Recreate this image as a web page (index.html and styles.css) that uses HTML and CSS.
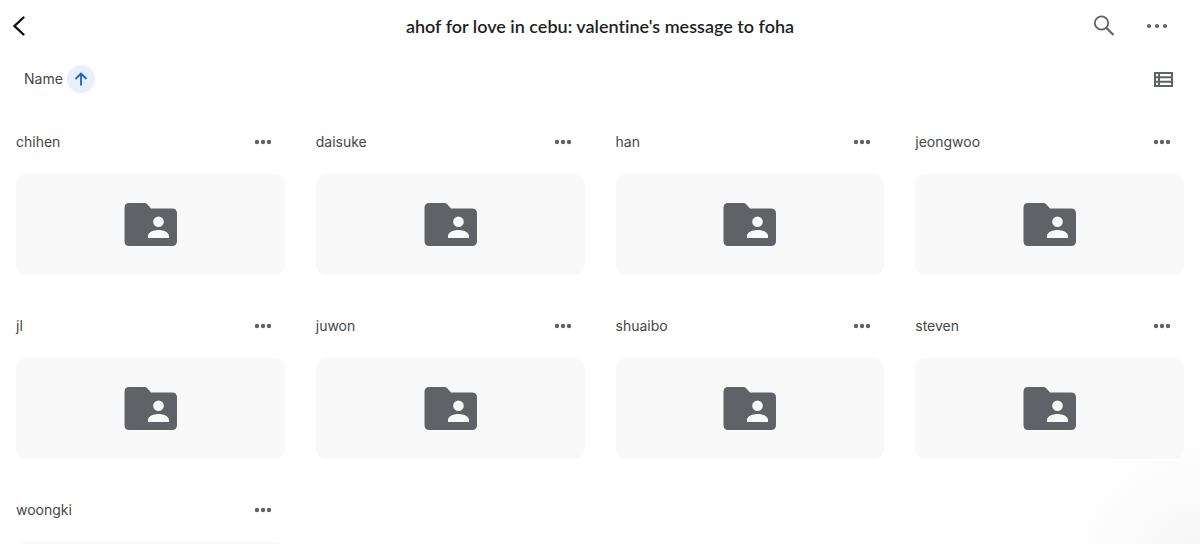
FILE: index.html
```html
<!DOCTYPE html>
<html lang="en">
<head>
  <meta charset="UTF-8" />
  <meta name="viewport" content="width=device-width, initial-scale=1.0"/>
  <title>ahof for love in cebu: valentine's message to foha</title>
  <link rel="stylesheet" href="styles.css">
</head>
<body>

  <!-- shared icons -->
  <svg class="sprite" aria-hidden="true">
    <symbol id="icon-dots" viewBox="0 0 18 6">
      <circle cx="3" cy="3" r="2.2"/><circle cx="9" cy="3" r="2.2"/><circle cx="15" cy="3" r="2.2"/>
    </symbol>
    <symbol id="icon-folder" viewBox="0 0.5 53 43">
      <path fill-rule="evenodd" d="M5 0.500H20.500Q22 0.500 23 1.500L27 6H48Q53 6 53 11V38.500Q53 43.500 48 43.500H5Q0.500 43.500 0.500 38.500V5.500Q0.500 0.500 5 0.500ZM34.500 14A5.300 5.300 0 1 0 34.500 24.600A5.300 5.300 0 1 0 34.500 14ZM24 35.500H45V33.500C45 29.500 39 27.500 34.500 27.500S24 29.500 24 33.500Z"/>
    </symbol>
  </svg>

  <header class="top-bar">
    <button type="button" class="icon-btn back" aria-label="Back">
      <svg width="14" height="22" viewBox="0 0 14 22"><path d="M11.500 2.500L2.500 11L11.500 19.500" fill="none" stroke="currentColor" stroke-width="2.400" stroke-linecap="round"/></svg>
    </button>
    <h1>ahof for love in cebu: valentine's message to foha</h1>
    <div class="actions">
      <button type="button" class="icon-btn" aria-label="Search">
        <svg width="22" height="22" viewBox="0 0 22 22"><g fill="none" stroke="currentColor" stroke-width="1.800"><circle cx="8.500" cy="8" r="6.700"/><path d="M13.200 12.700L20.500 20" stroke-width="2.200"/></g></svg>
      </button>
      <button type="button" class="icon-btn" aria-label="More options">
        <svg width="22" height="6" viewBox="0 0 22 6" fill="currentColor"><circle cx="3" cy="3" r="2.100"/><circle cx="11" cy="3" r="2.100"/><circle cx="19" cy="3" r="2.100"/></svg>
      </button>
    </div>
  </header>

  <div class="toolbar">
    <button type="button" class="sort-btn">
      Name
      <span class="sort-arrow">
        <svg width="14" height="14" viewBox="0 0 14 14"><path d="M7 13.500V2M1.500 7L7 1.500L12.500 7" fill="none" stroke="currentColor" stroke-width="1.800"/></svg>
      </span>
    </button>
    <button type="button" class="icon-btn" aria-label="List view">
      <svg width="19" height="15" viewBox="0 0 19 15"><path d="M1 1H18V14H1ZM1 5.300H18M1 9.700H18M5 1V14" fill="none" stroke="currentColor" stroke-width="2"/></svg>
    </button>
  </div>

  <main class="folder-grid">
    <article class="folder">
      <div class="folder-head"><h2>chihen</h2><button type="button" class="icon-btn" aria-label="More for chihen"><svg class="dots"><use href="#icon-dots"/></svg></button></div>
      <a href="#chihen" class="thumb" aria-label="chihen"><svg class="folder-icon"><use href="#icon-folder"/></svg></a>
    </article>
    <article class="folder">
      <div class="folder-head"><h2>daisuke</h2><button type="button" class="icon-btn" aria-label="More for daisuke"><svg class="dots"><use href="#icon-dots"/></svg></button></div>
      <a href="#daisuke" class="thumb" aria-label="daisuke"><svg class="folder-icon"><use href="#icon-folder"/></svg></a>
    </article>
    <article class="folder">
      <div class="folder-head"><h2>han</h2><button type="button" class="icon-btn" aria-label="More for han"><svg class="dots"><use href="#icon-dots"/></svg></button></div>
      <a href="#han" class="thumb" aria-label="han"><svg class="folder-icon"><use href="#icon-folder"/></svg></a>
    </article>
    <article class="folder">
      <div class="folder-head"><h2>jeongwoo</h2><button type="button" class="icon-btn" aria-label="More for jeongwoo"><svg class="dots"><use href="#icon-dots"/></svg></button></div>
      <a href="#jeongwoo" class="thumb" aria-label="jeongwoo"><svg class="folder-icon"><use href="#icon-folder"/></svg></a>
    </article>
    <article class="folder">
      <div class="folder-head"><h2>jl</h2><button type="button" class="icon-btn" aria-label="More for jl"><svg class="dots"><use href="#icon-dots"/></svg></button></div>
      <a href="#jl" class="thumb" aria-label="jl"><svg class="folder-icon"><use href="#icon-folder"/></svg></a>
    </article>
    <article class="folder">
      <div class="folder-head"><h2>juwon</h2><button type="button" class="icon-btn" aria-label="More for juwon"><svg class="dots"><use href="#icon-dots"/></svg></button></div>
      <a href="#juwon" class="thumb" aria-label="juwon"><svg class="folder-icon"><use href="#icon-folder"/></svg></a>
    </article>
    <article class="folder">
      <div class="folder-head"><h2>shuaibo</h2><button type="button" class="icon-btn" aria-label="More for shuaibo"><svg class="dots"><use href="#icon-dots"/></svg></button></div>
      <a href="#shuaibo" class="thumb" aria-label="shuaibo"><svg class="folder-icon"><use href="#icon-folder"/></svg></a>
    </article>
    <article class="folder">
      <div class="folder-head"><h2>steven</h2><button type="button" class="icon-btn" aria-label="More for steven"><svg class="dots"><use href="#icon-dots"/></svg></button></div>
      <a href="#steven" class="thumb" aria-label="steven"><svg class="folder-icon"><use href="#icon-folder"/></svg></a>
    </article>
    <article class="folder">
      <div class="folder-head"><h2>woongki</h2><button type="button" class="icon-btn" aria-label="More for woongki"><svg class="dots"><use href="#icon-dots"/></svg></button></div>
      <a href="#woongki" class="thumb" aria-label="woongki"><svg class="folder-icon"><use href="#icon-folder"/></svg></a>
    </article>
  </main>

</body>
</html>
```
FILE: styles.css
```css
* {
  margin: 0;
  padding: 0;
  box-sizing: border-box;
}

body {
  height: 100vh;
  overflow: hidden;
  background: radial-gradient(circle at 100% 105%, #f5f5f5, #fff 140px) #fff;
  color: #444746;
  font-family: Inter, sans-serif;
}

button {
  background: none;
  border: none;
  color: inherit;
  font: inherit;
  cursor: pointer;
}

svg {
  display: block;
}

.sprite {
  position: absolute;
  width: 0;
  height: 0;
}

.icon-btn {
  color: #5f6368;
}

/* Header */
.top-bar {
  display: grid;
  grid-template-columns: 1fr auto 1fr;
  align-items: center;
  height: 52px;
  padding: 0 32px 0 12px;
}

.top-bar h1 {
  color: #1f1f1f;
  font-family: Lato, sans-serif;
  font-size: 18px;
  font-weight: 600;
  font-variant-ligatures: none;
  line-height: 24px;
  margin-left: 20px;
}

.back {
  color: #111;
  justify-self: start;
}

.actions {
  display: flex;
  align-items: center;
  justify-content: flex-end;
  gap: 31px;
}

/* Sort row */
.toolbar {
  display: flex;
  align-items: center;
  justify-content: space-between;
  height: 54px;
  padding: 0 27px 0 24px;
}

.sort-btn {
  display: flex;
  align-items: center;
  gap: 4px;
  font-size: 14px;
  line-height: 20px;
}

.sort-arrow {
  display: flex;
  align-items: center;
  justify-content: center;
  width: 28px;
  height: 28px;
  border-radius: 50%;
  background: #e8f0fe;
  color: #1f5fc8;
}

/* Folders */
.folder-grid {
  display: grid;
  grid-template-columns: repeat(4, 1fr);
  gap: 19px 31px;
  padding: 4px 16px;
}

.folder-head {
  display: flex;
  align-items: center;
  justify-content: space-between;
  height: 64px;
  padding-right: 13px;
}

.folder-head h2 {
  font-size: 14px;
  font-weight: 400;
  line-height: 20px;
}

.dots {
  width: 18px;
  height: 6px;
  fill: currentColor;
}

.thumb {
  display: flex;
  align-items: center;
  justify-content: center;
  height: 101px;
  border-radius: 10px;
  background: #f9f9f9;
  color: #5f6368;
}

.folder-icon {
  width: 53px;
  height: 43px;
  fill: currentColor;
}

@media (max-width: 800px) {
  .folder-grid {
    grid-template-columns: repeat(2, 1fr);
  }
}
```
